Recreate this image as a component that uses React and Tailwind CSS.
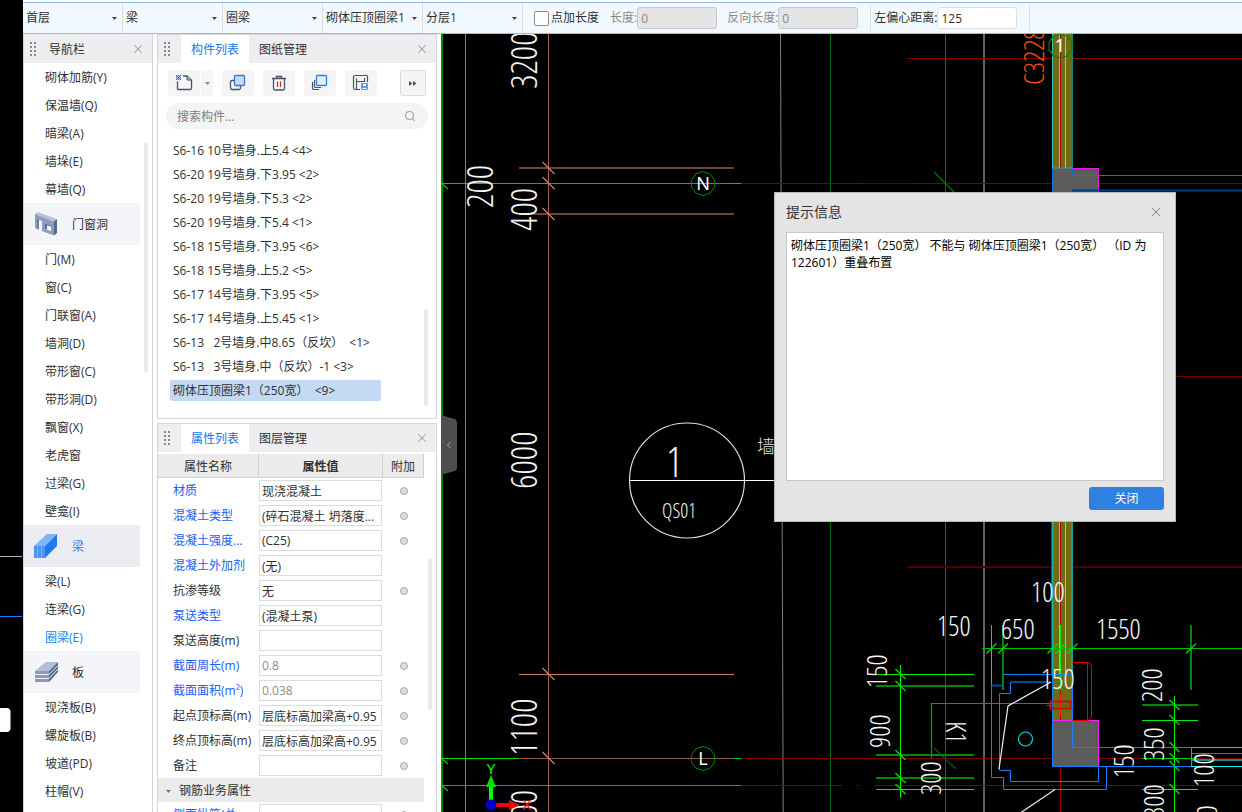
import React from "react";
import { X, ChevronLeft, Search } from "lucide-react";

const NAV = [
  { t: "砌体加筋(Y)" }, { t: "保温墙(Q)" }, { t: "暗梁(A)" }, { t: "墙垛(E)" }, { t: "幕墙(Q)" },
  { t: "门窗洞", icon: "opening" },
  { t: "门(M)" }, { t: "窗(C)" }, { t: "门联窗(A)" }, { t: "墙洞(D)" }, { t: "带形窗(C)" },
  { t: "带形洞(D)" }, { t: "飘窗(X)" }, { t: "老虎窗" }, { t: "过梁(G)" }, { t: "壁龛(I)" },
  { t: "梁", icon: "beam", active: true },
  { t: "梁(L)" }, { t: "连梁(G)" }, { t: "圈梁(E)", current: true },
  { t: "板", icon: "slab" },
  { t: "现浇板(B)" }, { t: "螺旋板(B)" }, { t: "坡道(PD)" }, { t: "柱帽(V)" },
];

const COMPONENTS = [
  "S6-16 10号墙身.上5.4 <4>",
  "S6-20 19号墙身.下3.95 <2>",
  "S6-20 19号墙身.下5.3 <2>",
  "S6-20 19号墙身.下5.4 <1>",
  "S6-18 15号墙身.下3.95 <6>",
  "S6-18 15号墙身.上5.2 <5>",
  "S6-17 14号墙身.下3.95 <5>",
  "S6-17 14号墙身.上5.45 <1>",
  "S6-13   2号墙身.中8.65（反坎）  <1>",
  "S6-13   3号墙身.中（反坎）-1 <3>",
  "砌体压顶圈梁1（250宽）  <9>",
];

const PROPS = [
  { n: "材质", v: "现浇混凝土", blue: true, dot: true },
  { n: "混凝土类型", v: "(碎石混凝土 坍落度...", blue: true, dot: true },
  { n: "混凝土强度...", v: "(C25)", blue: true, dot: true },
  { n: "混凝土外加剂", v: "(无)", blue: true },
  { n: "抗渗等级", v: "无", dot: true },
  { n: "泵送类型", v: "(混凝土泵)", blue: true },
  { n: "泵送高度(m)", v: "" },
  { n: "截面周长(m)", v: "0.8", blue: true, dot: true, ro: true },
  { n: "截面面积(m²)", v: "0.038", blue: true, dot: true, ro: true },
  { n: "起点顶标高(m)", v: "层底标高加梁高+0.95", dot: true },
  { n: "终点顶标高(m)", v: "层底标高加梁高+0.95", dot: true },
  { n: "备注", v: "", dot: true },
];

function NavIcon({ kind }) {
  if (kind === "opening")
    return (
      <svg width="24" height="26" viewBox="0 0 24 26" aria-hidden="true">
        <path d="M1 3 L4 1 L23 8 L20 10.500 Z" fill="#b9c3d9" />
        <path d="M20 10.500 L23 8 V22 L20 24.500 Z" fill="#56698f" />
        <path fillRule="evenodd" d="M1 3 L20 10.500 V24.500 L8 20 V10 L5 9 V19 L1 17 Z M11 12.500 V18 L17 20 V14.500 Z" fill="#8d9cbf" />
        <path d="M3 8 L5 9 V18 L3 17 Z" fill="#6b7ca3" />
        <path d="M11 12.500 L17 14.500 V15.500 L13 14.500 V18.500 L11 18 Z" fill="#5d7098" />
      </svg>
    );
  if (kind === "beam")
    return (
      <svg width="24" height="26" viewBox="0 0 24 26" aria-hidden="true">
        <path d="M0 13 L13 1 H23 L11 13 Z" fill="#7db5f5" />
        <path d="M11 13 L23 1 V13 L11 25 Z" fill="#2278f0" />
        <path d="M0 13 H11 V25 H0 Z" fill="#4a97f2" />
        <path d="M3.500 13 V25 M7.500 13 V25" stroke="#79b3f7" strokeWidth="1" />
      </svg>
    );
  return (
    <svg width="24" height="22" viewBox="0 0 24 22" aria-hidden="true">
      <path d="M1 10 L12 1 H24 L15 10 Z" fill="#b4bfd6" />
      <path d="M1 10 H15 V21 H1 Z" fill="#8a9abd" />
      <path d="M15 10 L24 1 V11 L15 21 Z" fill="#566a92" />
      <path d="M1 13.500 H15 L24 4.500 M1 17.500 H15 L24 8" stroke="#eef1f7" strokeWidth="1" fill="none" />
    </svg>
  );
}

function Grip() {
  return (
    <svg width="7" height="14" viewBox="0 0 7 14" className="shrink-0" aria-hidden="true">
      {[0, 4, 8, 12].map((y) => (
        <g key={y} fill="#8c8c8c">
          <rect x="0" y={y} width="2" height="2" />
          <rect x="4" y={y} width="2" height="2" />
        </g>
      ))}
    </svg>
  );
}

function CloseButton({ label }) {
  return (
    <button type="button" aria-label={label} className="ml-auto text-[#a0a0a0]">
      <X size={14} strokeWidth={1.8} />
    </button>
  );
}

function TabHeader({ tabs, closeLabel }) {
  return (
    <div role="tablist" className="flex h-7 shrink-0 items-center bg-[#eeeef0] pl-1.5 pr-[7px]">
      <Grip />
      <button type="button" role="tab" aria-selected="true" className="ml-2.5 h-full w-[68px] bg-white pt-0.5 text-[#1574e6]">
        {tabs[0]}
      </button>
      <button type="button" role="tab" aria-selected="false" className="h-full w-[68px] pt-0.5">
        {tabs[1]}
      </button>
      <CloseButton label={closeLabel} />
    </div>
  );
}

function Combo({ label, value }) {
  return (
    <label className="relative flex h-full w-[100px] shrink-0 items-center border-r border-[#d9dde0]">
      <span className="sr-only">{label}</span>
      <select defaultValue={value} className="w-full appearance-none bg-transparent pl-[3px] leading-6 outline-none">
        <option>{value}</option>
      </select>
      <svg width="5" height="3" viewBox="0 0 5 3" className="pointer-events-none absolute right-[5px]" aria-hidden="true">
        <path d="M0 0 H5 L2.5 3 Z" fill="#444" />
      </svg>
    </label>
  );
}

function LengthField({ label, value, disabled }) {
  return (
    <label className={disabled ? "flex items-center text-[#8a8a8a]" : "flex items-center"}>
      <span className="whitespace-nowrap">{label}</span>
      <input
        defaultValue={value}
        disabled={disabled}
        className="h-[22px] w-20 rounded-[3px] border border-[#dcdfe2] bg-white pl-[3px] leading-5 outline-none disabled:border-[#c4c8d0] disabled:bg-[#e4e4e4]"
      />
    </label>
  );
}

function ToolButton({ label, children }) {
  return (
    <button type="button" aria-label={label} className="flex h-[26px] w-8 items-center justify-center rounded-[3px] bg-[#f5f5f5]">
      {children}
    </button>
  );
}

function Toolbar() {
  return (
    <header className="mt-0.5 flex h-8 shrink-0 items-center border-y border-[#8fbcf0] bg-[#f1f9fe]">
      <Combo label="楼层" value="首层" />
      <Combo label="构件大类" value="梁" />
      <Combo label="构件类型" value="圈梁" />
      <Combo label="构件" value="砌体压顶圈梁1" />
      <Combo label="分层" value="分层1" />
      <label className="ml-[11px] flex items-center gap-0.5 whitespace-nowrap">
        <input type="checkbox" className="size-[15px] appearance-none rounded-[2px] border border-[#8c8c8c] bg-white" />
        点加长度
      </label>
      <div className="ml-[11px] flex items-center gap-2.5">
        <LengthField label="长度:" value="0" disabled />
        <LengthField label="反向长度:" value="0" disabled />
      </div>
      <div className="ml-3 h-[26px] border-l border-[#d9dde0]" />
      <div className="ml-[3px]">
        <LengthField label="左偏心距离:" value="125" />
      </div>
      <div className="ml-3 h-[26px] border-l border-[#d9dde0]" />
    </header>
  );
}

function NavPanel() {
  return (
    <nav className="flex w-[130px] shrink-0 flex-col overflow-hidden border-x border-[#d6d6d6] bg-white" aria-label="导航栏">
      <div className="flex h-[29px] shrink-0 items-center bg-[#eeeef0] pl-1.5 pr-[7px]">
        <Grip />
        <span className="ml-3 pt-0.5">导航栏</span>
        <CloseButton label="关闭导航栏" />
      </div>
      <div className="flex min-h-0 flex-1 overflow-hidden">
        <ul className="w-[116px]">
          {NAV.map((i) =>
            i.icon ? (
              <li key={i.t}>
                <a href="#group" className={i.active ? "flex h-[42px] items-center bg-[#ebecf1] pl-2.5 text-[#3f7fdc]" : "flex h-[42px] items-center bg-[#f4f5f8] pl-2.5"}>
                  <NavIcon kind={i.icon} />
                  <span className="ml-3.5 pt-0.5">{i.t}</span>
                </a>
              </li>
            ) : (
              <li key={i.t}>
                <a href="#item" className={i.current ? "flex h-7 items-center pl-[21px] pt-0.5 text-[#1683f5]" : "flex h-7 items-center pl-[21px] pt-0.5"}>
                  {i.t}
                </a>
              </li>
            )
          )}
        </ul>
        <div className="ml-1 mt-[79px] h-[230px] w-1 rounded-full bg-[#e9e9e9]" />
      </div>
    </nav>
  );
}

function ComponentPanel() {
  return (
    <section className="flex h-[385px] shrink-0 flex-col border border-[#d6d6d6] bg-white">
      <TabHeader tabs={["构件列表", "图纸管理"]} closeLabel="关闭构件列表" />
      <div className="flex items-center px-2.5 pt-[7px]">
        <div className="flex gap-px">
          <ToolButton label="新建">
            <svg width="18" height="18" viewBox="0 0 18 18" fill="none" aria-hidden="true">
              <path d="M2.500 7.500 V14.500 Q2.500 15.500 3.500 15.500 H15 Q16.500 15.500 16.500 14.500 V6 L12 2 H8" stroke="#4a5263" strokeWidth="1.300" />
              <path d="M12 2 V6 H16.500" fill="#b8bcc6" stroke="#4a5263" />
              <rect x="1" y="1" width="5" height="5" fill="#b5d3f8" />
              <path fill="#1f74dc" d="M1 1h1v1H1zM3 1h1v1H3zM5 1h1v1H5zM2 2h1v1H2zM4 2h1v1H4zM1 3h1v1H1zM3 3h1v1H3zM5 3h1v1H5zM2 4h1v1H2zM4 4h1v1H4zM1 5h1v1H1zM3 5h1v1H3zM5 5h1v1H5z" />
            </svg>
          </ToolButton>
          <button type="button" aria-label="新建选项" className="flex h-[26px] w-3 items-center justify-center rounded-r-[3px] bg-[#f5f5f5]">
            <svg width="5" height="3" viewBox="0 0 5 3" aria-hidden="true"><path d="M0 0 H5 L2.5 3 Z" fill="#888" /></svg>
          </button>
        </div>
        <div className="ml-[9px] flex gap-[9px]">
          <ToolButton label="复制">
            <svg width="18" height="18" viewBox="0 0 18 18" fill="none" aria-hidden="true">
              <path d="M5 6.500 H3 Q1.500 6.500 1.500 8 V13.500 Q1.500 15.500 3 15.500 H10 Q11.500 15.500 11.500 14 V12" stroke="#4a5263" strokeWidth="1.300" />
              <rect x="5.500" y="1.500" width="10" height="10" rx="1" fill="#c9dcf7" stroke="#2b7de0" strokeWidth="1.300" />
            </svg>
          </ToolButton>
          <ToolButton label="删除">
            <svg width="18" height="18" viewBox="0 0 18 18" fill="none" aria-hidden="true">
              <path d="M2 4.500 H16 M6.500 4 V2.500 H11.500 V4 M3.500 5 V14.500 Q3.500 16 5 16 H13 Q14.500 16 14.500 14.500 V5" stroke="#4a5263" strokeWidth="1.300" />
              <path d="M7.500 7.500 V13 M10.500 7.500 V13" stroke="#e02020" strokeWidth="1.200" />
            </svg>
          </ToolButton>
          <ToolButton label="层间复制">
            <svg width="18" height="18" viewBox="0 0 18 18" fill="none" aria-hidden="true">
              <path d="M1.500 8 V14.500 Q1.500 15.500 3 15.500 H8 M3.500 6 V12.500 Q3.500 13.500 5 13.500 H10" stroke="#4a5263" strokeWidth="1.200" />
              <rect x="5.500" y="1.500" width="10" height="10" rx="1" fill="#e6f0fd" stroke="#2b7de0" strokeWidth="1.300" />
            </svg>
          </ToolButton>
          <ToolButton label="存档">
            <svg width="18" height="18" viewBox="0 0 18 18" fill="none" aria-hidden="true">
              <path d="M8 15.500 H3 Q1.500 15.500 1.500 14 V3 Q1.500 1.500 3 1.500 H14 Q15.500 1.500 15.500 3 V8 M4.500 15 V4.500 M4.500 7.500 H12.500 M12.500 4 V8" stroke="#4a5263" strokeWidth="1.200" />
              <rect x="9" y="9" width="7" height="7" rx="1" fill="#5a9df0" />
              <rect x="11" y="10" width="3" height="2" fill="#fff" />
              <path d="M10.500 14.500 H14.500" stroke="#fff" />
            </svg>
          </ToolButton>
        </div>
        <button type="button" aria-label="更多" className="ml-auto flex size-[26px] items-center justify-center rounded-[3px] border border-[#dcdcdc] bg-[#f5f5f5]">
          <svg width="8" height="5" viewBox="0 0 8 5" aria-hidden="true"><path d="M0 0 L3.500 2.500 L0 5 Z M4 0 L7.500 2.500 L4 5 Z" fill="#4a5263" /></svg>
        </button>
      </div>
      <label className="mx-2 mt-[7px] flex h-[26px] shrink-0 items-center rounded-full bg-[#f4f4f4] pl-[11px] pr-3">
        <span className="sr-only">搜索构件</span>
        <input placeholder="搜索构件..." className="min-w-0 flex-1 bg-transparent pt-0.5 leading-5 outline-none placeholder:text-[#7d7d7d]" />
        <Search size={12} strokeWidth={2.4} className="text-[#a3a3a3]" />
      </label>
      <div className="mt-[9px] flex">
        <ul className="ml-3 w-[211px]">
          {COMPONENTS.map((c, i) => (
            <li key={c} className="flex h-6 items-center">
              <button
                type="button"
                className={i === 10 ? "h-[21px] w-full whitespace-pre rounded-[2px] bg-[#c4daf2] pl-[3px] pt-0.5 text-left" : "h-[21px] w-full whitespace-pre pl-[3px] pt-0.5 text-left"}
              >
                {c}
              </button>
            </li>
          ))}
        </ul>
        <div className="ml-auto mr-2 mt-[171px] h-[97px] w-1 rounded-full bg-[#e9e9e9]" />
      </div>
    </section>
  );
}

function PropertyPanel() {
  return (
    <section className="flex min-h-0 flex-1 flex-col overflow-hidden border border-b-0 border-[#d6d6d6] bg-white">
      <TabHeader tabs={["属性列表", "图层管理"]} closeLabel="关闭属性列表" />
      <div className="mt-0.5 flex min-h-0 flex-1 items-start overflow-hidden">
        <table className="w-[266px] table-fixed border-separate border-spacing-0">
          <thead>
            <tr className="h-6 bg-[#ebebeb]">
              <th className="w-[101px] border-b border-r border-[#d0d0d0] p-0 pt-0.5 font-normal">属性名称</th>
              <th className="w-[124px] border-b border-r border-[#d0d0d0] p-0 pt-0.5 font-bold">属性值</th>
              <th className="w-[41px] border-b border-r border-[#d0d0d0] p-0 pt-0.5 font-normal">附加</th>
            </tr>
          </thead>
          <tbody>
            {PROPS.map((p) => (
              <tr key={p.n} className="h-[25px]">
                <th scope="row" className={p.blue ? "whitespace-nowrap p-0 pl-[15px] text-left font-normal text-[#1660f5]" : "whitespace-nowrap p-0 pl-[15px] text-left font-normal"}>
                  {p.n}
                </th>
                <td className="p-0">
                  <input
                    aria-label={p.n}
                    defaultValue={p.v}
                    readOnly={p.ro}
                    className="block h-[21px] w-[123px] border border-[#dcdcdc] pl-0.5 leading-[19px] outline-none read-only:text-[#8c8c8c]"
                  />
                </td>
                <td className="p-0">
                  {p.dot && <input type="radio" aria-label={"附加 " + p.n} className="mx-auto block size-2 appearance-none rounded-full border border-[#a8a8ac] bg-[#dedee0]" />}
                </td>
              </tr>
            ))}
            <tr className="h-6 bg-[#ebebeb]">
              <th colSpan={3} scope="colgroup" className="p-0 pt-0.5 text-left font-normal">
                <span className="flex items-center gap-2 pl-2">
                  <svg width="5" height="3" viewBox="0 0 5 3" aria-hidden="true"><path d="M0 0 H5 L2.5 3 Z" fill="#777" /></svg>
                  钢筋业务属性
                </span>
              </th>
            </tr>
            <tr className="h-[25px]">
              <th scope="row" className="whitespace-nowrap p-0 pl-[15px] text-left font-normal text-[#1660f5]">侧面纵筋(总...</th>
              <td className="p-0">
                <input aria-label="侧面纵筋" className="block h-[21px] w-[123px] border border-[#dcdcdc] pl-0.5 outline-none" />
              </td>
              <td className="p-0">
                <input type="radio" aria-label="附加 侧面纵筋" className="mx-auto block size-2 appearance-none rounded-full border border-[#a8a8ac] bg-[#dedee0]" />
              </td>
            </tr>
          </tbody>
        </table>
        <div className="ml-1 mt-[104px] h-[152px] w-1 rounded-full bg-[#e9e9e9]" />
      </div>
    </section>
  );
}

const decagon = (cx, cy, r) =>
  Array.from({ length: 10 }, (_, i) => {
    const a = (i * Math.PI) / 5 + Math.PI / 2;
    return `${cx + r * Math.cos(a)},${cy + r * Math.sin(a)}`;
  }).join(" ");

/* Dimension texts that read bottom to top: text, baseline x, start y, size. */
const VERTICAL_DIMS = [
  ["3200", 537, 89, 36], ["200", 493, 208, 36], ["400", 537, 231, 36], ["6000", 537, 489, 36],
  ["1100", 537, 756, 36], ["300", 537, 833, 36],
  ["150", 887, 688, 28], ["900", 890, 748, 28], ["300", 941, 795, 28], ["200", 1162, 702, 28],
  ["350", 1164, 761, 28], ["150", 1134, 778, 28], ["100", 1214, 787, 28], ["300", 1164, 818, 28],
  ["100", 1217, 839, 28], ["600", 908, 846, 28],
];
const HORIZONTAL_DIMS = [
  ["100", 1031, 602], ["150", 937, 636], ["650", 1001, 639], ["1550", 1096, 639], ["150", 1041, 689],
];

function Drawing() {
  const line = (x1, y1, x2, y2, stroke, w = 1) => (
    <line key={[x1, y1, x2, y2, stroke].join()} x1={x1} y1={y1} x2={x2} y2={y2} stroke={stroke} strokeWidth={w} />
  );
  return (
    <svg className="block h-full w-full" role="img" aria-label="绘图区" fill="none">
      <g transform="translate(-441 -34)">
        {/* axis and grid lines */}
        {line(442, 34, 442, 900, "#008a00", 2)}
        {line(465.5, 34, 465.5, 900, "#808080")}
        {line(780.5, 34, 783.5, 900, "#7c7c7c")}
        {line(830.5, 34, 830.5, 900, "#006a00")}
        {line(945.5, 34, 945.5, 900, "#007a00")}
        {line(984, 34, 984, 900, "#c4c4c4", 1)}
        {line(741, 183.5, 1400, 183.5, "#780000")}
        {line(741, 758.5, 1400, 758.5, "#780000")}
        {line(741, 785.5, 842, 785.5, "#780000")}
        {line(857, 785.5, 859, 785.5, "#780000")}
        {line(874, 785.5, 1400, 785.5, "#780000")}
        {line(907, 58.5, 1400, 58.5, "#860000")}
        {line(907, 567, 1400, 567, "#4a0000", 2)}
        {line(1176, 376.5, 1400, 376.5, "#700000")}
        {line(441, 183.5, 520, 183.5, "#00d000")}
        {line(734, 183.5, 741, 183.5, "#00d000")}
        {line(441, 758.5, 520, 758.5, "#00e000")}
        {line(734, 758.5, 741, 758.5, "#00d000")}
        {line(441, 785.5, 741, 785.5, "#00c000")}
        {line(862, 183.5, 912, 183.5, "#003a00")}
        {[183, 758, 785].map((y) => line(441, y, 448, y + 6, "#00d000", 1.2))}
        {line(934, 172, 956, 194, "#007000", 1.2)}
        {line(934, 748, 956, 769, "#006000", 1.2)}

        {/* left dimension chain */}
        {line(548.5, 34, 548.5, 900, "#a0654f")}
        {line(519, 168, 734, 168, "#6e4234", 2)}
        {line(519, 183.5, 734, 183.5, "#a0654f")}
        {line(519, 214, 734, 214, "#6e4234", 2)}
        {line(519, 674.5, 734, 674.5, "#cf7f63")}
        {line(519, 758.5, 734, 758.5, "#8f5845")}
        {[168, 183, 214, 674, 758].map((y) => line(542.5, y - 6, 554.5, y + 6, "#cf7f63", 1.2))}

        {/* section mark */}
        <circle cx="687" cy="480.500" r="57.500" stroke="#e0e0e0" strokeWidth="1.200" />
        {line(629, 480.5, 780, 480.5, "#fff")}

        {/* upper beam and column */}
        <rect x="1052" y="34" width="20" height="134" fill="#6f6c14" />
        {line(1052.5, 34, 1052.5, 168, "#2ec4b4")}
        {line(1059.5, 34, 1059.5, 168, "#3ee6d0")}
        {line(1060.5, 34, 1060.5, 168, "#9a0000")}
        {line(1065.5, 34, 1065.5, 168, "#30f0e0")}
        {line(1072, 34, 1072, 168, "#0f8a80", 2)}
        <rect x="1053" y="168" width="46" height="40" fill="#5c5c5c" />
        {line(1052, 168, 1072, 168, "#2aa8a8", 1)}
        <path d="M1072 168.500 H1098.500 V200" stroke="#e818e8" />
        <path d="M1052.500 168 V200" stroke="#1570e0" />
        <path d="M1072.500 168 V175.500 H1400" stroke="#1570d8" />
        {line(1072, 190.5, 1400, 190.5, "#003c88", 2)}

        {/* lower beam and column */}
        <rect x="1052" y="515" width="20" height="205" fill="#6f6c14" />
        {line(1059.5, 515, 1059.5, 674, "#3ee6d0")}
        {line(1060.5, 515, 1060.5, 900, "#9a0000")}
        {line(1065.5, 515, 1065.5, 674, "#30f0e0")}
        {line(1052.5, 515, 1052.5, 674, "#12b0b0", 2)}
        {line(1072, 515, 1072, 674, "#12a0a0", 2)}
        <rect x="1053" y="720" width="46" height="46" fill="#5c5c5c" />
        <path d="M1053 720.500 H1098.500 V766" stroke="#ff20ff" />

        {/* green dimension chains */}
        {line(982, 648.5, 1400, 648.5, "#00c000")}
        {line(991.5, 625, 991.5, 690, "#00f000")}
        {line(1003, 625, 1003, 690, "#008800", 2)}
        {line(1060.5, 625, 1060.5, 690, "#00f000")}
        {line(1191, 625, 1191, 690, "#008800", 2)}
        {[991.5, 1003, 1052.5, 1060.5, 1072.5, 1191].map((x) => line(x - 5, 653.5, x + 5, 643.5, "#00e000", 1.2))}
        {line(900.5, 665, 900.5, 798, "#00f000")}
        {line(876, 674.5, 974, 674.5, "#00f000")}
        {line(876, 686, 974, 686, "#008800", 2)}
        {line(876, 755, 974, 755, "#008800", 2)}
        {line(876, 778, 974, 778, "#008800", 2)}
        {line(876, 789.5, 974, 789.5, "#00f000")}
        {[674, 686, 755, 778, 789].map((y) => line(895.5, y - 5, 905.5, y + 5, "#00e000", 1.2))}
        {line(1174.5, 696, 1174.5, 900, "#00f000")}
        {line(1142, 705, 1198, 705, "#008800", 2)}
        {line(1142, 720.5, 1198, 720.5, "#00f000")}
        {line(1142, 758.5, 1198, 758.5, "#00d000")}
        {line(1142, 789.5, 1198, 789.5, "#00f000")}
        {[705, 720, 747, 758, 766, 789].map((y) => line(1169.5, y - 5, 1179.5, y + 5, "#00e000", 1.2))}
        <path d="M931.500 758 V703.500 H1058" stroke="#00a800" strokeWidth="1.200" />

        {/* blue outlines */}
        <path d="M1003 674.500 H1072.500 V747.500 H1191" stroke="#1580ff" />
        <path d="M991 685.500 H1003 M1050 682 H1011" stroke="#004a96" strokeWidth="2" />
        <path d="M991.500 685 V777.500 H1003.500 V789.500 H1106.500 V767" stroke="#1580ff" />
        <path d="M1010.500 682 V693.500 H999.500 V770.500 H1010.500 V781.500 H1098.500 V767" stroke="#1580ff" />
        <path d="M1052.500 674 V766.500 H1191" stroke="#1580ff" />
        {line(1191, 747.5, 1400, 747.5, "#10c8d8")}
        {line(1191, 753.5, 1400, 753.5, "#109090")}
        {line(1191, 760, 1400, 760, "#0f8a8a", 2)}
        {line(1191, 766.5, 1400, 766.5, "#10f0f0")}
        {line(1191.5, 747, 1191.5, 767, "#10b0c0")}
        <path d="M1051 682 L1008 706 L999 769" stroke="#eee" strokeWidth="1.200" />
        <path d="M1055 789.500 L1004 824" stroke="#eee" strokeWidth="1.200" />
        <circle cx="1025.500" cy="739" r="7" stroke="#10d8d8" strokeWidth="1.200" />

        {/* red door and marker */}
        <path d="M1072 662.500 H1088 Q1091.500 663 1091.500 667 V716 Q1091 720.500 1087 720.500 H1072 M1087.500 663 V720" stroke="#e80000" />
        <rect x="1050.500" y="701.500" width="20" height="7" stroke="#c01010" strokeWidth="2" />
        <path d="M1047 705.500 H1074 M1060.500 694 V716" stroke="#ff1010" />

        {/* dimension texts */}
        <g fill="#f4f4f4" className="font-['Open_Sans_Condensed_Light','Open_Sans_Light',sans-serif] font-light">
          {VERTICAL_DIMS.map(([t, x, y, s]) => (
            <text key={t + x + y} fontSize={s} transform={`translate(${x} ${y}) rotate(-90)`}>{t}</text>
          ))}
          {HORIZONTAL_DIMS.map(([t, x, y]) => (
            <text key={t + x} x={x} y={y} fontSize="28">{t}</text>
          ))}
          <text fontSize="28" transform="translate(946 721) rotate(90)">K1</text>
          <text x="666" y="477" fontSize="42">1</text>
          <text x="662" y="518" fontSize="20">QS01</text>
          <text fontSize="28" fill="#ff4a10" transform="translate(1044 85) rotate(-90)">C3228</text>
        </g>
        <text x="757" y="453" fontSize="18" fill="#e0e0e0" className="font-['Noto_Sans_CJK_SC',sans-serif] font-light">墙</text>

        {/* axis bubbles */}
        <polygon points={decagon(703, 183.5, 12)} stroke="#008800" />
        <polygon points={decagon(703, 758.5, 12)} stroke="#008800" />
        <polygon points={decagon(1060.5, 46, 12)} stroke="#008800" strokeWidth="1.200" />
        <g fill="#fff" fontSize="18" textAnchor="middle" className="font-['Noto_Sans',sans-serif]">
          <text x="703" y="190">N</text>
          <text x="703" y="765">L</text>
          <text x="1060" y="52">1</text>
        </g>

        {/* coordinate origin */}
        <path d="M491 805 V786" stroke="#00ff00" strokeWidth="4" />
        <path d="M486 787 L491 775 L496 787 Z" fill="#00e000" />
        <path d="M491 805 H510" stroke="#ff0000" strokeWidth="4" />
        <path d="M509 800 L520 805 L509 810 Z" fill="#f00000" />
        <circle cx="491" cy="805" r="5.500" fill="#0000c8" />
        <g fontSize="15" textAnchor="middle" className="font-['Noto_Sans',sans-serif]">
          <text x="491" y="774" fill="#00ff00">Y</text>
          <text x="527" y="810" fill="#ff1010">X</text>
        </g>
      </g>
    </svg>
  );
}

function MessageDialog() {
  return (
    <div role="dialog" aria-labelledby="dlg-title" className="absolute left-[333px] top-[158px] flex h-[330px] w-[402px] flex-col border border-[#b8b8b8] bg-[#e4e4e4] px-[11px]">
      <div className="flex h-[39px] shrink-0 items-center pb-0.5">
        <h2 id="dlg-title" className="text-sm text-[#333]">提示信息</h2>
        <button type="button" aria-label="关闭窗口" className="ml-auto text-[#808080]">
          <X size={16} strokeWidth={1.5} />
        </button>
      </div>
      <p className="min-h-0 flex-1 border border-[#c8c8c8] bg-white p-1 leading-[17px] text-black">
        砌体压顶圈梁1（250宽） 不能与 砌体压顶圈梁1（250宽） （ID 为 122601）重叠布置
      </p>
      <button type="button" className="mb-[11px] ml-auto mt-1.5 h-[23px] w-[75px] rounded-[3px] bg-[#2e80e2] text-white">
        关闭
      </button>
    </div>
  );
}

export default function App() {
  return (
    <div className="flex h-screen overflow-hidden bg-white font-['Open_Sans','Noto_Sans_CJK_SC',sans-serif] text-xs text-[#303030]">
      <aside className="w-[23px] shrink-0 bg-black">
        <svg width="23" height="740" aria-hidden="true">
          <path d="M0 556.500 H22" stroke="#b0b0b0" />
          <path d="M0 616.500 H22" stroke="#1580ff" />
          <rect x="-6" y="708" width="16.500" height="24" rx="4" fill="#fff" />
        </svg>
      </aside>
      <div className="flex min-w-0 flex-1 flex-col">
        <Toolbar />
        <div className="flex min-h-0 flex-1">
          <NavPanel />
          <div className="ml-1 flex w-[280px] shrink-0 flex-col gap-1">
            <ComponentPanel />
            <PropertyPanel />
          </div>
          <main className="relative ml-1 min-w-0 flex-1 overflow-hidden bg-black">
            <Drawing />
            <button
              type="button"
              aria-label="收起面板"
              className="absolute left-0 top-[381px] flex h-[60px] w-4 items-center justify-center bg-[#4e4e4e] text-[#a8a8a8] [clip-path:polygon(0_0,90%_7%,100%_11%,100%_89%,90%_93%,0_100%)]"
            >
              <ChevronLeft size={12} />
            </button>
            <MessageDialog />
          </main>
        </div>
      </div>
    </div>
  );
}
